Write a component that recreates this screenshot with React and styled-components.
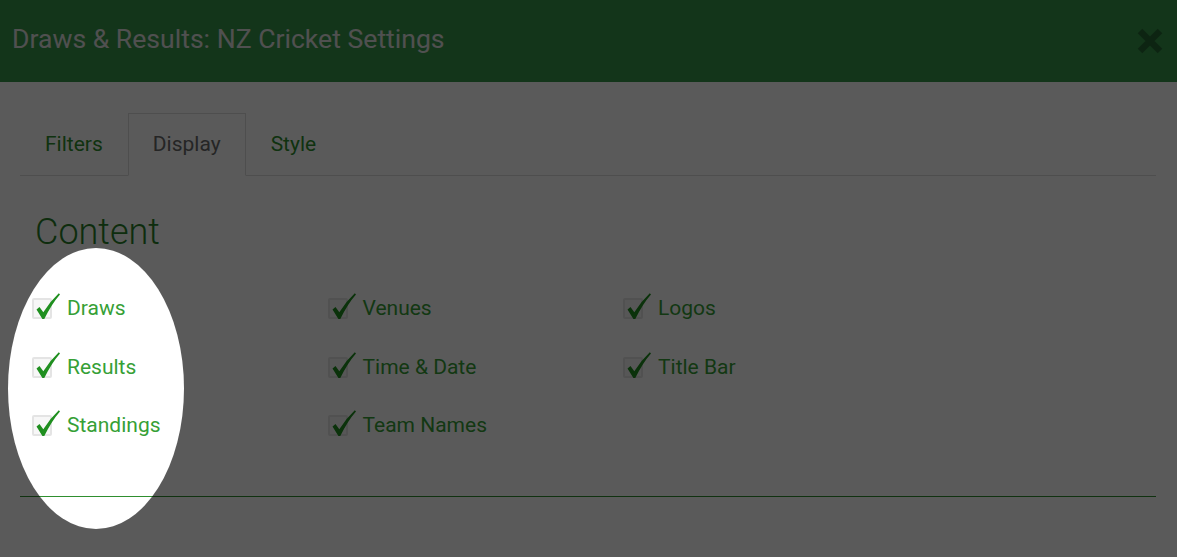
import React from "react";
import styled, { createGlobalStyle } from "styled-components";

const Global = createGlobalStyle`
  html, body { margin: 0; padding: 0; background: #fff; overflow: hidden; }
  body { font-family: Roboto, "Noto Sans", Arial, sans-serif; }
  * { box-sizing: border-box; }
`;

const Page = styled.div`
  position: relative;
  width: 1177px;
  height: 557px;
  background: #fff;
  overflow: hidden;
`;

const Header = styled.header`
  height: 82px;
  background: #36964a;
  display: flex;
  align-items: center;
  justify-content: space-between;
  padding: 0 14px 5px 12px;
`;

const Title = styled.h1`
  margin: 0;
  font-size: 26.6px;
  font-weight: 400;
  color: #e2e2e2;
  line-height: 30px;
`;

const CloseButton = styled.button`
  border: 0;
  background: none;
  padding: 0;
  margin-top: 5px;
  width: 26px;
  height: 28px;
  cursor: pointer;
  color: rgba(0, 0, 0, 0.3);
  display: flex;
`;

const Body = styled.div`
  padding: 31px 21px 0 20px;
`;

const TabList = styled.div`
  display: flex;
  border-bottom: 1px solid #dddddd;
  height: 63px;
`;

const Tab = styled.div`
  height: 63px;
  padding: 0 24px 2px;
  display: flex;
  align-items: center;
  font-size: 21px;
  color: ${(p) => (p.$active ? "#6a6a6a" : "#2e8f2e")};
  background: ${(p) => (p.$active ? "#fff" : "transparent")};
  border: 1px solid ${(p) => (p.$active ? "#dddddd" : "transparent")};
  border-bottom: ${(p) => (p.$active ? "1px solid #fff" : "none")};
  margin-bottom: ${(p) => (p.$active ? "-1px" : "0")};
`;

const Panel = styled.div`
  padding: 0 0 0 12px;
`;

const Heading = styled.h2`
  margin: 36px 0 0 3px;
  font-size: 36px;
  line-height: 40px;
  font-weight: 300;
  color: #2a7f2a;
`;

const Grid = styled.div`
  margin-top: 27px;
  display: grid;
  grid-template-columns: repeat(3, 295.5px);
  grid-auto-flow: column;
  grid-template-rows: repeat(3, 58.5px);
`;

const Option = styled.label`
  display: flex;
  align-items: center;
  gap: 15px;
  font-size: 21px;
  line-height: 24px;
  color: #36a036;
`;

const Box = styled.span`
  position: relative;
  width: 20px;
  height: 21px;
  border: 2px solid #e4e4e4;
  border-radius: 2px;
  background: #f7f7f7;
  flex: none;
  margin-top: 1px;
`;

const Mark = styled.svg`
  position: absolute;
  left: 1px;
  top: -8px;
  width: 26px;
  height: 29px;
  overflow: visible;
`;

const Divider = styled.hr`
  margin: 41px 0 0 0;
  border: 0;
  border-top: 1px solid #2f8f2f;
`;

const Spotlight = styled.div`
  position: absolute;
  left: 8px;
  top: 248px;
  width: 176px;
  height: 281px;
  border-radius: 50%;
  box-shadow: 0 0 0 3000px rgba(0, 0, 0, 0.647);
  pointer-events: none;
`;

const Check = () => (
  <Box>
    <Mark viewBox="0 0 26 29">
      <path
        d="M1.5 17.5 L4.5 15 L8.3 20.3 Q15 9.5 23.8 1.3 L25 2.4 Q16.5 12 9.3 27 L7.4 27 Z"
        fill="#1f8f1f"
      />
    </Mark>
  </Box>
);

const options = [
  "Draws",
  "Results",
  "Standings",
  "Venues",
  "Time & Date",
  "Team Names",
  "Logos",
  "Title Bar",
];

export default function App() {
  return (
    <Page>
      <Global />
      <Header>
        <Title>Draws &amp; Results: NZ Cricket Settings</Title>
        <CloseButton aria-label="Close">
          <svg width="26" height="28" viewBox="0 0 26 28">
            <path
              d="M3 4 L23 24 M23 4 L3 24"
              stroke="currentColor"
              strokeWidth="6.5"
              strokeLinecap="butt"
            />
          </svg>
        </CloseButton>
      </Header>
      <Body>
        <TabList>
          <Tab>Filters</Tab>
          <Tab $active>Display</Tab>
          <Tab>Style</Tab>
        </TabList>
        <Panel>
          <Heading>Content</Heading>
          <Grid>
            {options.map((o) => (
              <Option key={o}>
                <Check />
                {o}
              </Option>
            ))}
          </Grid>
        </Panel>
        <Divider />
      </Body>
      <Spotlight />
    </Page>
  );
}
